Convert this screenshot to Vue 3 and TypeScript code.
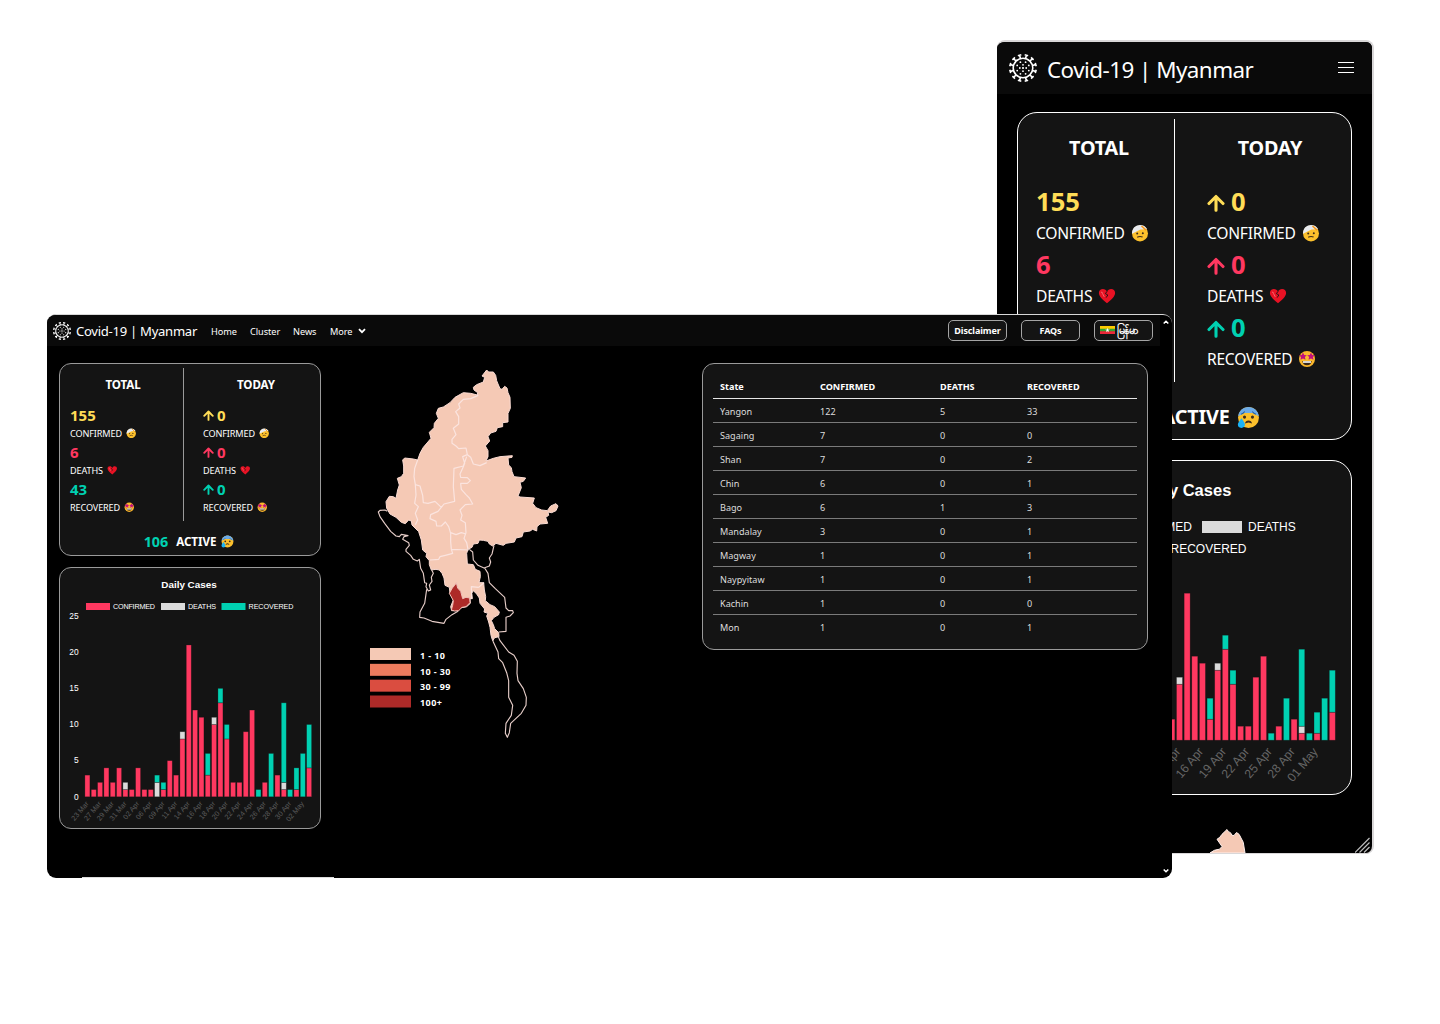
<script setup lang="ts">
interface Stat {
  label: string
  total: number
  today: number
  tone: string
  emoji: string
}

interface Bar {
  x: number
  y: number
  w: number
  h: number
  kind: string
}

const stats: Stat[] = [
  { label: 'CONFIRMED', total: 155, today: 0, tone: 'yellow', emoji: '#e-bandage' },
  { label: 'DEATHS', total: 6, today: 0, tone: 'red', emoji: '#e-heart' },
  { label: 'RECOVERED', total: 43, today: 0, tone: 'green', emoji: '#e-star' },
]

const states: [string, number, number, number][] = [
  ['Yangon', 122, 5, 33],
  ['Sagaing', 7, 0, 0],
  ['Shan', 7, 0, 2],
  ['Chin', 6, 0, 1],
  ['Bago', 6, 1, 3],
  ['Mandalay', 3, 0, 1],
  ['Magway', 1, 0, 1],
  ['Naypyitaw', 1, 0, 1],
  ['Kachin', 1, 0, 0],
  ['Mon', 1, 0, 1],
]

// confirmed, deaths, recovered per reporting day
const daily: number[][] = [
  [3, 0, 0], [1, 0, 0], [2, 0, 0], [4, 0, 0], [2, 0, 0], [4, 0, 0],
  [1, 1, 0], [1, 0, 0], [4, 0, 0], [1, 0, 0], [1, 0, 0], [0, 2, 1],
  [1, 0, 1], [5, 0, 0], [3, 0, 0], [8, 1, 0], [21, 0, 0], [12, 0, 0],
  [11, 0, 0], [3, 0, 3], [10, 1, 0], [13, 0, 2], [8, 0, 2], [2, 0, 0],
  [2, 0, 0], [9, 0, 0], [12, 0, 0], [0, 0, 1], [2, 0, 0], [0, 0, 6],
  [3, 0, 0], [1, 1, 11], [0, 0, 1], [1, 0, 3], [0, 0, 6], [4, 0, 6],
]

function buildBars(x0: number, step: number, base: number, unit: number, w: number): Bar[] {
  const out: Bar[] = []
  const kinds = ['c', 'd', 'r']
  daily.forEach((day, i) => {
    let y = base
    day.forEach((v, k) => {
      if (!v) return
      y -= v * unit
      out.push({ x: x0 + i * step - w / 2, y, w, h: v * unit, kind: kinds[k] })
    })
  })
  return out
}

const wideBars = buildBars(28.4, 6.335, 229.8, 7.23, 5)
const phoneBars = buildBars(47.9, 7.64, 280.2, 7, 6)

const wideLabels = [
  '23 Mar', '27 Mar', '29 Mar', '31 Mar', '02 Apr', '06 Apr', '09 Apr', '11 Apr', '14 Apr',
  '16 Apr', '18 Apr', '20 Apr', '22 Apr', '24 Apr', '26 Apr', '28 Apr', '30 Apr', '02 May',
].map((text, i) => ({ text, x: 30 + i * 12.67 }))

const phoneLabels = ['13 Apr', '16 Apr', '19 Apr', '22 Apr', '25 Apr', '28 Apr', '01 May'].map(
  (text, i) => ({ text, x: 164 + i * 22.92 }),
)

const legend = [
  { text: '1 - 10', fill: '#f5c9b5', len: 75 },
  { text: '10 - 30', fill: '#ed7c5e', len: 91 },
  { text: '30 - 99', fill: '#da4d40', len: 91 },
  { text: '100+', fill: '#ad2a28', len: 66 },
]

const spikes = Array.from({ length: 12 }, (_, i) => i * 30 + 15)
</script>

<template>
  <div class="stage">
    <svg class="defs" width="0" height="0">
      <defs>
        <symbol id="virus" viewBox="0 0 28 28">
          <g fill="none" stroke="#fff" stroke-width="1.6">
            <circle cx="14" cy="14" r="9.8" />
            <path v-for="a in spikes" :key="a" d="M14 4.2V1M12.200 .8h3.600" :transform="`rotate(${a} 14 14)`" />
          </g>
          <g fill="#fff">
            <circle cx="14" cy="14" r="1.1" /><circle cx="14" cy="10.8" r=".9" /><circle cx="14" cy="17.2" r=".9" />
            <circle cx="10.8" cy="14" r=".9" /><circle cx="17.2" cy="14" r=".9" />
            <circle cx="11.4" cy="8.2" r=".9" /><circle cx="16.6" cy="8.2" r=".9" />
            <circle cx="11.4" cy="19.8" r=".9" /><circle cx="16.6" cy="19.8" r=".9" />
            <circle cx="8.2" cy="11.4" r=".9" /><circle cx="8.2" cy="16.6" r=".9" />
            <circle cx="19.8" cy="11.4" r=".9" /><circle cx="19.8" cy="16.6" r=".9" />
          </g>
        </symbol>
        <symbol id="e-bandage" viewBox="0 0 18 18">
          <circle cx="9" cy="9.4" r="8" fill="#fcc02c" />
          <path d="M1 8.6C1.400 3.800 5 .9 9.200 1c3.200 0 5.600 1.500 7 4.200L9.500 5.600 1 9.800z" fill="#e8eaee" />
          <path d="M10.500 2l4.500 4.200" stroke="#f79a1c" stroke-width="1.600" />
          <circle cx="6.200" cy="9.600" r="1" fill="#3b2a1a" />
          <circle cx="11.800" cy="9.300" r="1" fill="#3b2a1a" />
          <path d="M6.200 13.300q2.700-1.600 5.400-.2" stroke="#3b2a1a" fill="none" stroke-width="1.100" />
        </symbol>
        <symbol id="e-heart" viewBox="0 0 18 18">
          <path d="M9 16.300C5 12.900.9 9.500.9 6 .9 3.500 2.700 2 4.900 2 6.700 2 8.200 3 9 4.600 9.800 3 11.300 2 13.100 2c2.200 0 4 1.500 4 4 0 3.500-4.100 6.900-8.100 10.300z" fill="#e81224" />
          <path d="M9.200 4.200L7.400 6.600l2.400 1.400-1.600 2.600" stroke="#151515" stroke-width=".9" fill="none" />
          <path d="M3 5.200q1.500-.5 1.600 1.500l1.700 3.200" stroke="#f4696f" fill="none" />
        </symbol>
        <symbol id="e-star" viewBox="0 0 18 18">
          <circle cx="9" cy="9" r="8" fill="#fcb82c" />
          <path d="M5 2.600l1.200 2.300 2.600.3-1.900 1.900.6 2.700L5 8.500 2.500 9.800l.5-2.700L1 5.200l2.700-.3zM13 2.600l1.200 2.300 2.700.3-2 1.900.6 2.700-2.500-1.300-2.500 1.300.6-2.700-1.900-1.900 2.600-.3z" fill="#c2107c" />
          <path d="M4.300 11h9.400q-.5 4.200-4.700 4.200T4.300 11z" fill="#3b2a1a" />
          <path d="M5 11.200h8v1.600H5z" fill="#fff" />
        </symbol>
        <symbol id="e-sweat" viewBox="0 0 22 22">
          <circle cx="11" cy="11" r="10" fill="#fcc02c" />
          <path d="M1.100 9.800C1.700 4.600 6 1 11 1s9.300 3.600 9.900 8.800L15 6.800H7z" fill="#6cabe8" />
          <path d="M3.800 7.800q2.200-.4 3.600-2.500M18.200 7.800q-2.200-.4-3.600-2.500" stroke="#2b5f9e" fill="none" />
          <circle cx="7.200" cy="10.600" r="1.500" fill="#3b2a1a" />
          <circle cx="14.800" cy="10.600" r="1.500" fill="#3b2a1a" />
          <path d="M7.600 16.800q.5-3 3.400-3t3.400 3l-3.400-1z" fill="#3b2a1a" />
          <path d="M4.200 11.800c1.800 2.600 3.400 4.200 3.400 6A3.500 3.300 0 0 1 4.200 21 3.500 3.300 0 0 1 .8 17.800c0-1.800 1.800-3.400 3.400-6z" fill="#1ab2f5" />
        </symbol>
        <symbol id="arrow" viewBox="0 0 18 18">
          <path d="M9 16.200V2.500M2 9.500l7-7 7 7" fill="none" stroke="currentColor" stroke-width="3.100" stroke-linecap="round" stroke-linejoin="round" />
        </symbol>
      </defs>
    </svg>

    <section class="window phone">
      <header class="bar">
        <svg class="logo"><use href="#virus" /></svg>
        <span class="brand">Covid-19 | Myanmar</span>
        <svg class="burger" viewBox="0 0 16 12"><path d="M0 .5h16M0 5.500h16M0 10.500h16" stroke="#fff" /></svg>
      </header>
      <div class="card stats">
        <div class="cols">
          <div class="col total">
            <h2>TOTAL</h2>
            <template v-for="s in stats" :key="s.label">
              <div class="num" :class="s.tone">{{ s.total }}</div>
              <div class="lab"><span>{{ s.label }}</span><svg class="emo"><use :href="s.emoji" /></svg></div>
            </template>
          </div>
          <div class="col today">
            <h2>TODAY</h2>
            <template v-for="s in stats" :key="s.label">
              <div class="num" :class="s.tone"><svg class="arr"><use href="#arrow" /></svg>{{ s.today }}</div>
              <div class="lab"><span>{{ s.label }}</span><svg class="emo"><use :href="s.emoji" /></svg></div>
            </template>
          </div>
        </div>
        <div class="active"><b class="green">106</b><b>ACTIVE</b><svg class="emo-l"><use href="#e-sweat" /></svg></div>
      </div>
      <div class="card chart">
        <svg width="333" height="333" viewBox="1 1 333 333">
          <text class="ptitle" x="168" y="36" text-anchor="middle">Daily Cases</text>
          <rect x="54" y="61" width="40" height="12" class="c" />
          <text class="pleg" x="175" y="71" text-anchor="end">CONFIRMED</text>
          <rect x="185" y="61" width="40" height="12" class="d" />
          <text class="pleg" x="231" y="71">DEATHS</text>
          <rect x="108" y="83" width="40" height="12" class="r" />
          <text class="pleg" x="153.500" y="93">RECOVERED</text>
          <rect v-for="(b, i) in phoneBars" :key="i" :x="b.x" :y="b.y" :width="b.w" :height="b.h" :class="['seg', b.kind]" />
          <text v-for="l in phoneLabels" :key="l.text" class="ptick" text-anchor="end" :transform="`translate(${l.x} 292) rotate(-50)`">{{ l.text }}</text>
        </svg>
      </div>
      <svg class="tip" viewBox="0 0 36 24">
        <path d="M0 24q4-3.500 9.500-3.800L12 17.500 7 10.300q3-1.500 5-5L17 .5q1 2.500 3.500 3.200l1.500 2.600 2 .2 2.500-3q3 1 4.500 5.500 3 4 3 9L35 24z" fill="#f5c9b5" stroke="#fff1ee" />
      </svg>
      <svg class="grip" viewBox="0 0 16 16"><path d="M0 15.500L14.500 1M4.500 15.500L14.500 5.500M9 15.500L14.500 10" stroke="#bbb" stroke-width="1.200" /></svg>
    </section>

    <section class="window wide">
      <header class="bar">
        <svg class="logo"><use href="#virus" /></svg>
        <span class="brand">Covid-19 | Myanmar</span>
        <nav>
          <a class="n1">Home</a><a class="n2">Cluster</a><a class="n3">News</a><a class="n4">More</a>
          <svg class="caret" viewBox="0 0 8 6"><path d="M1 1.200l3 3 3-3" fill="none" stroke="#fff" stroke-width="1.800" /></svg>
        </nav>
        <div class="buttons">
          <button>Disclaimer</button>
          <button>FAQs</button>
          <button class="lang">
            <svg class="flag" viewBox="0 0 15 8" preserveAspectRatio="none">
              <path fill="#fecb00" d="M0 0h15v3H0z" /><path fill="#34a332" d="M0 2.700h15v3H0z" /><path fill="#ea2839" d="M0 5.300h15V8H0z" />
              <path fill="#fff" d="M7.500 1.800l.6 1.600h1.700L8.400 4.500l.5 1.700-1.400-1-1.400 1 .5-1.700-1.400-1.100h1.700z" />
            </svg><span class="my">မြန်မာ</span>
          </button>
        </div>
      </header>
      <main>
        <div class="left">
          <div class="card stats">
            <div class="cols">
              <div class="col total">
                <h2>TOTAL</h2>
                <template v-for="s in stats" :key="s.label">
                  <div class="num" :class="s.tone">{{ s.total }}</div>
                  <div class="lab"><span>{{ s.label }}</span><svg class="emo"><use :href="s.emoji" /></svg></div>
                </template>
              </div>
              <div class="col today">
                <h2>TODAY</h2>
                <template v-for="s in stats" :key="s.label">
                  <div class="num" :class="s.tone"><svg class="arr"><use href="#arrow" /></svg>{{ s.today }}</div>
                  <div class="lab"><span>{{ s.label }}</span><svg class="emo"><use :href="s.emoji" /></svg></div>
                </template>
              </div>
            </div>
            <div class="active"><b class="green">106</b><b>ACTIVE</b><svg class="emo-l"><use href="#e-sweat" /></svg></div>
          </div>
          <div class="card chart">
            <svg width="260" height="260" viewBox="1 1 260 260">
              <text class="wtitle" x="130" y="20.500" text-anchor="middle">Daily Cases</text>
              <rect x="27" y="36" width="24" height="7" class="c" />
              <text class="wleg" x="54" y="41.500" textLength="42">CONFIRMED</text>
              <rect x="102" y="36" width="24" height="7" class="d" />
              <text class="wleg" x="129" y="41.500" textLength="28">DEATHS</text>
              <rect x="162.500" y="36" width="24" height="7" class="r" />
              <text class="wleg" x="189.500" y="41.500" textLength="45">RECOVERED</text>
              <text v-for="n in 6" :key="n" class="waxis" x="19.700" :y="232.600 - (n - 1) * 36.200" text-anchor="end">{{ (n - 1) * 5 }}</text>
              <rect v-for="(b, i) in wideBars" :key="i" :x="b.x" :y="b.y" :width="b.w" :height="b.h" :class="['seg', b.kind]" />
              <text v-for="l in wideLabels" :key="l.text" class="wtick" text-anchor="end" :transform="`translate(${l.x} 237) rotate(-50)`">{{ l.text }}</text>
            </svg>
          </div>
        </div>

        <svg class="map" viewBox="0 0 630 1170">
          <path
            class="land"
            d="M380 30L386 36 400 36 407 46 410 62 414 72 420 86 426 88 434 79 441 84 444 98 450 112 451 145 444 160 444 186 428 188 428 200 412 203 408 214 392 219 384 230 389 243 376 258 384 272 384 290 378 303 400 295 420 290 457 287 456 292 444 294 446 315 454 323 456 335 462 350 497 354 490 364 480 367 484 383 474 408 480 411 523 414 518 430 528 443 545 450 562 452 572 438 588 431 594 438 588 452 575 458 564 456 566 466 557 472 563 490 540 492 531 500 530 513 518 508 510 513 490 516 486 530 468 534 463 546 438 550 430 556 408 550 398 558 388 552 384 544 370 541 358 540 354 550 340 552 336 562 324 568 320 580 322 612 340 614 346 628 360 634 361 650 357 668 371 668 373 690 377 710 376 722 390 734 404 740 418 756 416 764 402 772 394 782 400 794 404 806 416 818 417 830 404 833 398 842 393 826 390 802 386 786 380 768 384 760 372 756 374 747 360 730 358 714 350 702 340 692 335 700 337 716 330 716 331 730 320 740 300 744 296 752 275 752 272 740 280 720 270 700 268 682 255 676 252 654 246 640 238 630 228 628 214 630 208 614 208 602 198 590 200 580 188 570 184 540 176 515 156 495 154 483 146 480 136 491 124 487 108 472 90 462 80 445 78 425 88 409 100 410 108 415 113 390 118 375 112 355 124 350 131 340 131 318 128 300 134 294 160 297 173 300 180 280 190 262 213 235 208 217 222 203 223 190 235 175 229 160 235 145 250 141 270 128 285 112 310 98 332 100 352 105 353 98 342 90 340 82 350 74 370 66 374 52 366 48z"
          />
          <g class="border">
            <path d="M355 106L332 116 310 118 296 132 300 144 287 155 296 170 296 192 280 205 288 224 276 238 276 250 288 258 296 266 318 264 322 284 332 292 340 312 360 317 380 308M173 300L164 325 162 350 166 374 180 378 188 406 190 428 204 430 225 424 244 442 252 432 284 424 280 380 282 325 310 318 320 290M322 284L308 290 314 310 310 320 300 342 302 352 322 353 331 362 322 370 302 370 304 388 318 404 328 414 338 432 316 434 300 450 306 466 302 480 316 488 318 518 312 535 320 548 324 568" />
            <path d="M166 374L168 405 164 430 175 440 166 460 173 480 166 494M244 442L234 454 212 464 210 476 228 484 230 498 244 498 256 486 266 500 272 520 272 545 274 568M272 518L288 524 304 518 318 522M274 568L326 570M274 568L278 580 256 586 240 590 236 598 210 600" />
            <path d="M335 716L334 680 356 682M356 682L372 668" />
          </g>
          <path class="red" d="M289 668L284 676 277 684 268 700 280 722 278 736 274 750 284 753 296 752 306 742 318 740 330 728 329 714 318 712 308 716 302 694 293 684z" />
          <g class="outline">
            <path d="M82 454L75 450 60 451 55 456 60 470 74 490 92 514 108 528 118 530 124 523 144 527 132 530 128 538 146 548 148 556 138 568 138 574 152 586 160 598 172 603 178 598 182 625 190 640 194 668 200 670 198 680 205 693 212 690 208 675 216 664 214 652 220 640 214 628M200 688L194 730 180 756 179 772 192 774 216 784 252 790 258 778 276 764 294 754" />
            <path d="M328 568L338 576 340 600 354 616 372 624 388 618 392 606 388 594 396 582 402 556M374 624L384 640 388 668 406 686 434 712 438 744 446 752 458 752 460 758 450 768 438 772 438 814 416 816" />
            <path d="M396 830L400 846 414 876 416 896 428 908 440 938 446 962 446 1012 458 1036 454 1066 438 1090 436 1120 442 1132 448 1118 452 1090 484 1060 498 1036 499 1012 490 986 474 962 471 940 472 904 462 886 446 876 420 842 414 828" />
          </g>
          <g v-for="(l, i) in legend" :key="l.text">
            <rect x="30" :y="864 + i * 47.500" width="123" height="36" :fill="l.fill" />
            <text class="maptext" x="180" :y="896 + i * 47.500" :textLength="l.len">{{ l.text }}</text>
          </g>
        </svg>

        <div class="card table">
          <div class="tr th"><span>State</span><span>CONFIRMED</span><span>DEATHS</span><span>RECOVERED</span></div>
          <div v-for="r in states" :key="r[0]" class="tr">
            <span v-for="(c, i) in r" :key="i">{{ c }}</span>
          </div>
        </div>
      </main>
      <svg class="sup" viewBox="0 0 6 4"><path d="M.7 3.500L3 1.200l2.300 2.300" fill="none" stroke="#fff" stroke-width="1.500" /></svg>
      <svg class="sdown" viewBox="0 0 6 4"><path d="M.7 .5L3 2.800 5.300.5" fill="none" stroke="#fff" stroke-width="1.500" /></svg>
      <i class="hscroll"></i>
    </section>
  </div>
</template>

<style>
body {
  background: #fff;
  overflow: hidden;
}
</style>

<style scoped>
.stage {
  position: relative;
  width: 1440px;
  height: 1024px;
  overflow: hidden;
  background: #fff;
  color: #fff;
  font-family: 'Noto Sans', 'Open Sans', sans-serif;
}
.defs {
  position: absolute;
}
svg {
  display: block;
  flex: none;
}
.window {
  position: absolute;
  background: #000;
  overflow: hidden;
  box-sizing: border-box;
}
.phone {
  left: 997px;
  top: 40px;
  width: 377px;
  height: 814px;
  border: solid #d9d7d8;
  border-width: 2px 2px 1px 0;
  border-radius: 8px;
}
.wide {
  left: 47px;
  top: 314px;
  width: 1125px;
  height: 564px;
  border-top: 1px solid #d8d8d8;
  border-radius: 9px;
}
.bar {
  display: flex;
  align-items: center;
  background: #0a0a0a;
}
.card {
  box-sizing: border-box;
  background: #141414;
  border: 1px solid #fff;
}
.cols {
  display: grid;
}
.col {
  box-sizing: border-box;
}
h2 {
  margin: 0;
  font-weight: 700;
  text-align: center;
}
.num,
.lab,
.active {
  display: flex;
  align-items: center;
  white-space: nowrap;
}
.num {
  font-weight: 700;
}
.yellow {
  color: #ffdd57;
}
.red {
  color: #ff3860;
}
.green {
  color: #00d1b2;
}
.c {
  fill: #ff3860;
}
.d {
  fill: #dbdbdb;
}
.r {
  fill: #00d1b2;
}
.seg {
  stroke: rgba(20, 20, 20, 0.4);
  stroke-width: 0.7;
}

/* phone */
.phone .bar {
  height: 52px;
  padding: 0 18px 0 12px;
}
.phone .logo {
  width: 28px;
  height: 28px;
}
.phone .brand {
  margin: 2px auto 0 10px;
  font-size: 22.4px;
  letter-spacing: -0.53px;
  white-space: nowrap;
}
.phone .burger {
  width: 16px;
  height: 12px;
}
.phone .card {
  width: 335px;
  margin-left: 20px;
  border-radius: 20px;
}
.phone .stats {
  margin-top: 18px;
  height: 328px;
}
.phone .cols {
  grid-template-columns: 157px 1fr;
  padding-top: 6px;
}
.phone .col {
  height: 263px;
}
.phone .total {
  border-right: 1px solid #fff;
  padding-left: 18px;
}
.phone .today {
  padding-left: 32px;
}
.phone h2 {
  margin-top: 13px;
  height: 54px;
  line-height: 31px;
  font-size: 19.8px;
  letter-spacing: -0.2px;
}
.phone .total h2 {
  padding-right: 12px;
}
.phone .today h2 {
  padding-right: 18px;
}
.phone .num {
  height: 31px;
  font-size: 25.6px;
}
.phone .lab {
  height: 32px;
  font-size: 15.6px;
  letter-spacing: -0.25px;
}
.phone .lab span {
  margin-top: -1px;
}
.phone .emo {
  width: 18px;
  height: 18px;
  margin: 0 0 0 6px;
}
.phone .arr {
  width: 18px;
  height: 18px;
  margin: 3px 6px 0 0;
}
.phone .active {
  justify-content: center;
  height: 30px;
  margin-top: 20px;
  font-size: 19.8px;
  gap: 7px;
  letter-spacing: -0.2px;
}
.phone .active b {
  margin-top: -1px;
}
.phone .active .green {
  font-size: 25px;
  margin-right: 3px;
}
.phone .emo-l {
  width: 23px;
  height: 23px;
}
.phone .chart {
  margin-top: 20px;
  height: 335px;
}
.ptitle,
.pleg,
.ptick,
.wtitle,
.wleg,
.waxis,
.wtick {
  font-family: 'Liberation Sans', sans-serif;
  fill: #fff;
}
.ptitle {
  font-size: 16.5px;
  font-weight: 700;
}
.pleg {
  font-size: 12px;
}
.ptick {
  font-size: 12.2px;
  fill: #666;
}
.tip {
  width: 36px;
  height: 24px;
  margin: 34px 0 0 213px;
}
.grip {
  position: absolute;
  right: 1px;
  bottom: 0;
  width: 16px;
  height: 16px;
}

/* wide */
.wide .bar {
  width: 1113px;
  height: 31px;
  padding: 0 7px 0 6px;
  box-sizing: border-box;
}
.wide .logo {
  width: 18px;
  height: 18px;
}
.wide .brand {
  width: 121px;
  margin: 1px 14px 0 5px;
  font-size: 13.1px;
  line-height: 18px;
  letter-spacing: -0.29px;
  white-space: nowrap;
}
nav {
  display: flex;
  align-items: center;
  font-size: 9.2px;
  letter-spacing: -0.05px;
  margin-top: 1px;
}
.n1 {
  width: 39px;
}
.n2 {
  width: 43px;
}
.n3 {
  width: 37px;
}
.n4 {
  width: 28px;
}
.caret {
  width: 8px;
  height: 6px;
}
.buttons {
  display: flex;
  gap: 14px;
  margin-left: auto;
}
button {
  display: flex;
  align-items: center;
  justify-content: center;
  width: 59px;
  height: 21px;
  padding: 0;
  box-sizing: border-box;
  border: 1px solid #a5a5a5;
  border-radius: 5px;
  background: #141414;
  color: #fff;
  font: 700 9px 'Noto Sans', sans-serif;
  letter-spacing: -0.1px;
  white-space: nowrap;
}
.lang {
  justify-content: flex-start;
  padding-left: 5px;
}
.flag {
  width: 15px;
  height: 8px;
  margin: -2px 2px 0 0;
}
.my {
  font-size: 10.8px;
  font-weight: 700;
}
main {
  display: flex;
  align-items: flex-start;
  padding: 17px 0 0 12px;
}
.wide .card {
  border-color: #9a9a9a;
  border-radius: 12px;
}
.left {
  width: 262px;
}
.wide .stats {
  height: 193px;
}
.wide .cols {
  grid-template-columns: 124px 1fr;
  padding-top: 4px;
}
.wide .col {
  height: 153px;
}
.wide .total {
  border-right: 1px solid #9a9a9a;
  padding-left: 10px;
}
.wide .today {
  padding-left: 19px;
}
.wide h2 {
  margin-top: 7px;
  height: 31px;
  line-height: 20px;
  font-size: 11.6px;
  letter-spacing: -0.1px;
}
.wide .total h2 {
  padding-right: 7px;
}
.wide .today h2 {
  padding-right: 11px;
}
.wide .num {
  height: 17px;
  font-size: 15px;
}
.wide .lab {
  height: 20px;
  font-size: 9.1px;
  letter-spacing: -0.12px;
}
.wide .emo {
  width: 10.5px;
  height: 10.5px;
  margin-left: 4px;
}
.wide .arr {
  width: 11px;
  height: 11px;
  margin: 2px 3px 0 0;
}
.wide .active {
  justify-content: center;
  height: 20px;
  margin-top: 10px;
  padding-right: 2px;
  font-size: 11.6px;
  letter-spacing: -0.05px;
  gap: 5px;
}
.wide .active .green {
  font-size: 14.4px;
  margin-right: 3px;
}
.wide .emo-l {
  width: 13px;
  height: 13px;
}
.wide .chart {
  margin-top: 11px;
  height: 262px;
}
.wtitle {
  font-size: 9.9px;
  font-weight: 700;
}
.wleg {
  font-size: 7.2px;
}
.waxis {
  font-size: 8.4px;
}
.wtick {
  font-size: 7.2px;
  fill: #5c5c5c;
}
.map {
  width: 210px;
  height: 390px;
  margin: -3px 0 0 39px;
}
.land {
  fill: #f5c9b5;
  stroke: #fbdcd4;
  stroke-width: 3;
  stroke-linejoin: round;
}
.border {
  fill: none;
  stroke: #fbe4df;
  stroke-width: 3.6;
  stroke-linejoin: round;
}
.map .red {
  fill: #ad2a28;
  stroke: #f0c0b8;
  stroke-width: 3;
}
.outline {
  fill: none;
  stroke: #e6cdc8;
  stroke-width: 3.4;
  stroke-linejoin: round;
}
.maptext {
  font-family: 'Noto Sans', sans-serif;
  font-weight: 700;
  font-size: 27px;
  fill: #fff;
}
.table {
  width: 446px;
  height: 287px;
  margin-left: 132px;
  padding: 11px 10px 0;
}
.tr {
  display: grid;
  grid-template-columns: 100px 120px 87px 1fr;
  height: 24px;
  line-height: 25px;
  box-sizing: border-box;
  padding-left: 7px;
  border-bottom: 1px solid #7b7b7b;
  font-size: 9.1px;
  color: #ddd;
}
.th {
  border-color: #e6e6e6;
  font-weight: 700;
  font-size: 9.1px;
  line-height: 24px;
  color: #fff;
}
.tr:last-child {
  border: 0;
}
.sup,
.sdown {
  position: absolute;
  right: 3px;
  width: 6px;
  height: 4px;
}
.sup {
  top: 5px;
}
.sdown {
  bottom: 5px;
}
.hscroll {
  position: absolute;
  left: 35px;
  bottom: 0;
  width: 252px;
  height: 1px;
  background: #ddd;
}
</style>
